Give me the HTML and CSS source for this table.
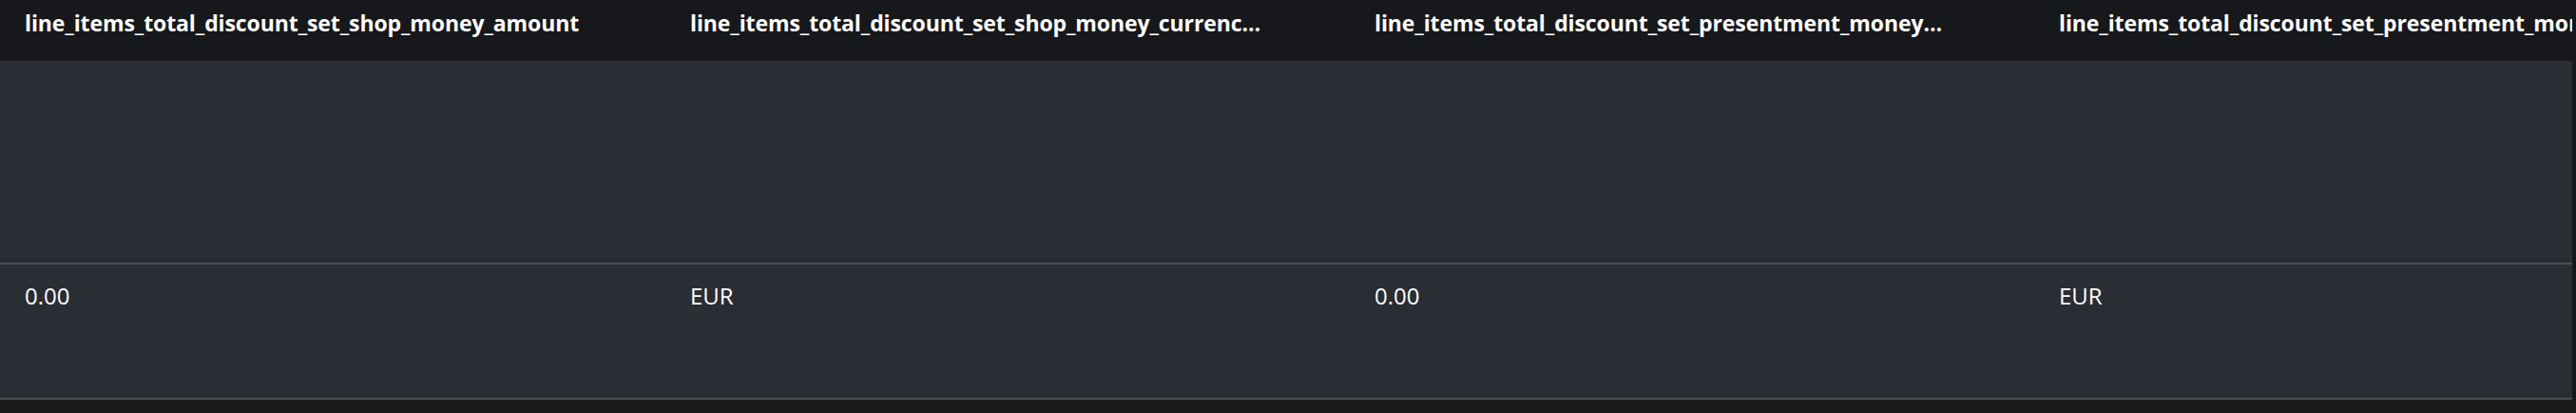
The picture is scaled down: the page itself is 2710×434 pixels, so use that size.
FILE: index.html
```html
<!DOCTYPE html>
<html lang="en">
<head>
<meta charset="utf-8">
<title>Table</title>
<link rel="stylesheet" href="styles.css">
</head>
<body>
<div class="frame">
  <div class="table">
    <div class="head-row">
      <div class="cell head c1"><span class="label">line_items_total_discount_set_shop_money_amount</span></div>
      <div class="cell head"><span class="label">line_items_total_discount_set_shop_money_currency_code</span></div>
      <div class="cell head"><span class="label">line_items_total_discount_set_presentment_money_amount</span></div>
      <div class="cell head"><span class="label wide">line_items_total_discount_set_presentment_money_currency_code</span></div>
    </div>
    <div class="row row-tall">
      <div class="cell c1"></div>
      <div class="cell"></div>
      <div class="cell"></div>
      <div class="cell"></div>
    </div>
    <div class="row row-data">
      <div class="cell data c1">0.00</div>
      <div class="cell data">EUR</div>
      <div class="cell data">0.00</div>
      <div class="cell data">EUR</div>
    </div>
  </div>
  <div class="strip"></div>
</div>
</body>
</html>
```

FILE: styles.css
```css
html, body {
  margin: 0;
  padding: 0;
  background: #1a1b1d;
}

body {
  font-family: "Open Sans", "Noto Sans", sans-serif;
  color: #ffffff;
}

.frame {
  display: flex;
  width: 2710px;
  height: 434px;
  background: #1a1b1d;
}

.table {
  width: 2706px;
  overflow: hidden;
  display: flex;
  flex-direction: column;
  flex: 0 0 2706px;
}

.strip {
  flex: 0 0 4px;
  background: #17181b;
  height: 420px;
}

.head-row {
  display: flex;
  height: 64px;
  background: #17181b;
}

.row {
  display: flex;
  background: #2a2d33;
  border-bottom: 2px solid #4b5058;
}

.row-tall {
  height: 212px;
}

.row-data {
  height: 140px;
}

.cell {
  flex: 0 0 720px;
  box-sizing: border-box;
  padding: 0 26px;
  overflow: hidden;
  white-space: nowrap;
}

.cell.c1 {
  flex-basis: 700px;
}

.head {
  padding-top: 8px;
  font-size: 23px;
  line-height: 32px;
  font-weight: 700;
  letter-spacing: -0.1px;
}

.label {
  display: block;
  max-width: 604px;
  overflow: hidden;
  text-overflow: ellipsis;
  white-space: nowrap;
}

.label.wide {
  max-width: none;
  text-overflow: clip;
}

.data {
  padding-top: 21px;
  font-size: 24px;
  line-height: 24px;
  font-weight: 400;
}
```
